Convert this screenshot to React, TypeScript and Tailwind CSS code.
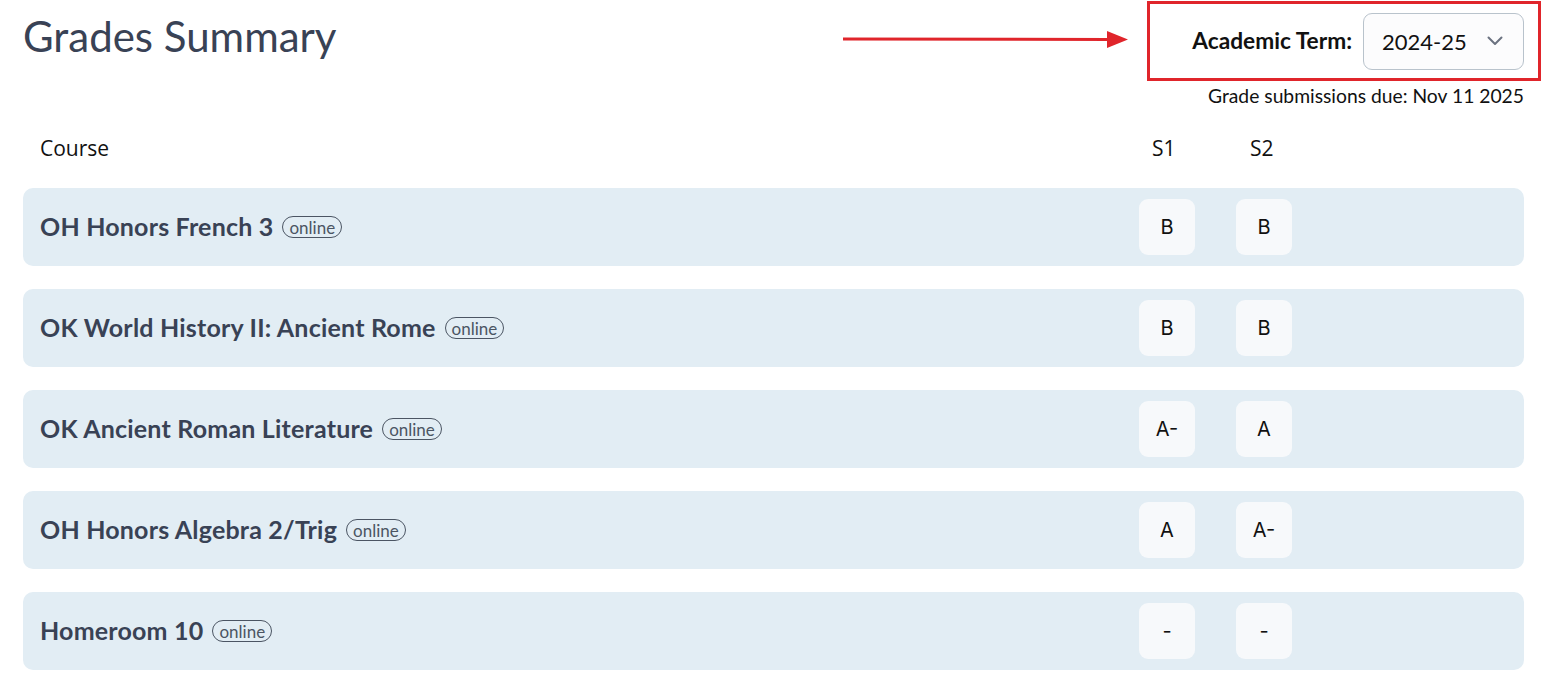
const courses = [
  { name: "OH Honors French 3", s1: "B", s2: "B" },
  { name: "OK World History II: Ancient Rome", s1: "B", s2: "B" },
  { name: "OK Ancient Roman Literature", s1: "A-", s2: "A" },
  { name: "OH Honors Algebra 2/Trig", s1: "A", s2: "A-" },
  { name: "Homeroom 10", s1: "-", s2: "-" },
];

function GradeBox({ grade }: { grade: string }) {
  return (
    <div className="w-14 h-14 rounded-[9px] bg-[#f7f9fb] flex items-center justify-center text-[20px] text-[#111] font-['Inter',sans-serif]">
      {grade}
    </div>
  );
}

function CourseRow({ name, s1, s2 }: { name: string; s1: string; s2: string }) {
  return (
    <div className="h-[78px] rounded-[10px] bg-[#e2edf4] flex items-center pl-[17px] pr-[232px]">
      <div className="flex-1 flex items-center gap-[9px]">
        <span className="text-[25px] tracking-[0.2px] font-bold text-[#394255]">{name}</span>
        <span className="border border-[#4b5563] rounded-full px-[6px] h-[22px] flex items-center text-[17px] leading-none text-[#4b5563]">
          online
        </span>
      </div>
      <div className="flex gap-[41px]">
        <GradeBox grade={s1} />
        <GradeBox grade={s2} />
      </div>
    </div>
  );
}

export default function App() {
  return (
    <div className="relative w-[1544px] min-h-[686px] bg-white pl-[23px] pr-[20px] font-['Lato',sans-serif]">
      {/* annotation arrow */}
      <svg className="absolute left-[843px] top-[30px]" width="286" height="18" viewBox="0 0 286 18">
        <line x1="0" y1="9" x2="266" y2="9.5" stroke="#e0252b" strokeWidth="3" />
        <polygon points="264,1 285,9.5 264,18" fill="#e0252b" />
      </svg>

      <div className="flex justify-between items-start">
        <h1 className="mt-[15px] text-[42px] leading-none text-[#394255]">Grades Summary</h1>

        <div className="flex flex-col items-end">
          <div className="mt-px -mr-[17px] h-[80px] border-[3px] border-[#e0252b] pl-[42px] pr-[14px] flex items-center gap-[11px]">
            <span className="text-[22.7px] font-bold text-[#111]">Academic Term:</span>
            <div className="w-[161px] h-[57px] rounded-[9px] border border-[#b9c3cc] bg-[#fcfcfd] flex items-center justify-between pl-[18px] pr-[20px]">
              <span className="text-[22px] text-[#111]">2024-25</span>
              <svg width="16" height="10" viewBox="0 0 16 10">
                <polyline points="1.5,1.5 8,8 14.5,1.5" fill="none" stroke="#6b7280" strokeWidth="2" strokeLinecap="round" strokeLinejoin="round" />
              </svg>
            </div>
          </div>
          <div className="mt-[3px] text-[19.3px] leading-6 text-[#111]">Grade submissions due: Nov 11 2025</div>
        </div>
      </div>

      <div className="mt-[27px] h-7 flex items-center pl-[17px] pr-[232px] text-[21px] text-[#111] font-['Open_Sans',sans-serif]">
        <div className="flex-1">Course</div>
        <div className="flex gap-[41px]">
          <div className="w-14 pl-[13px]">S1</div>
          <div className="w-14 pl-[14px]">S2</div>
        </div>
      </div>

      <div className="mt-[25px] flex flex-col gap-[23px]">
        {courses.map((c) => (
          <CourseRow key={c.name} name={c.name} s1={c.s1} s2={c.s2} />
        ))}
      </div>
    </div>
  );
}
